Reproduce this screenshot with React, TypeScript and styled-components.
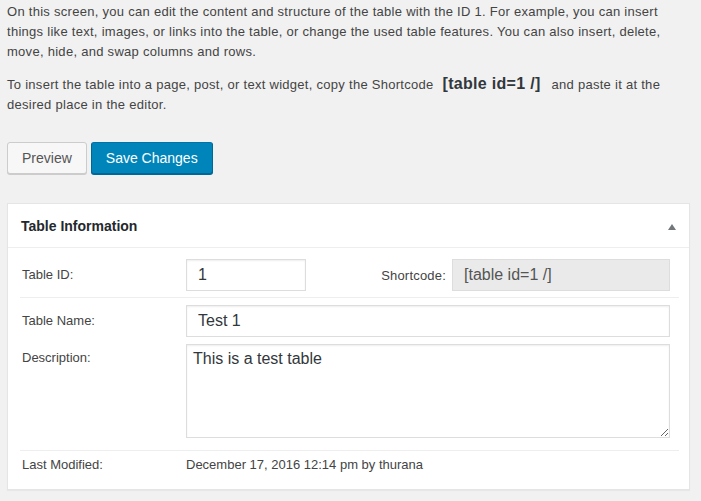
import React from "react";
import styled, { createGlobalStyle } from "styled-components";

const Global = createGlobalStyle`
  html, body { margin: 0; padding: 0; background: #f1f1f1; }
  body { font-family: "Liberation Sans", Arial, sans-serif; color: #444; font-size: 13px; }
  * { box-sizing: border-box; }
`;

const Page = styled.div`
  padding: 2px 12px 12px 7px;
  width: 701px;
`;

const Para = styled.p`
  margin: 0 0 13px;
  font-size: 13px;
  line-height: 20px;
  letter-spacing: 0.28px;
  color: #444;
  white-space: nowrap;
`;

const InlineCode = styled.span`
  display: inline-block;
  font-size: 16px;
  line-height: 18px;
  font-weight: bold;
  letter-spacing: 0.3px;
  color: #32373c;
  padding: 0 7px 0 9px;
`;

const Actions = styled.div`
  display: flex;
  gap: 4px;
  margin-top: 27px;
  margin-bottom: 29px;
`;

const Button = styled.button<{ $primary?: boolean }>`
  height: 32px;
  padding: 0 14px;
  font-family: inherit;
  font-size: 14px;
  border-radius: 3px;
  border: 1px solid #ccc;
  border-color: ${(p) => (p.$primary ? "#0073aa #006799 #006799" : "#ccc")};
  background: ${(p) => (p.$primary ? "#0085ba" : "#f7f7f7")};
  color: ${(p) => (p.$primary ? "#fff" : "#555")};
  box-shadow: ${(p) => (p.$primary ? "0 1px 0 #006799" : "0 1px 0 #ccc")};
  cursor: pointer;
`;

const Panel = styled.section`
  width: 683px;
  background: #fff;
  border: 1px solid #e5e5e5;
  box-shadow: 0 1px 1px rgba(0, 0, 0, 0.04);
`;

const PanelHeader = styled.header`
  height: 44px;
  display: flex;
  align-items: center;
  justify-content: space-between;
  padding: 0 13px 0 13px;
  border-bottom: 1px solid #eee;
`;

const PanelTitle = styled.h2`
  margin: 0;
  font-size: 14px;
  font-weight: bold;
  color: #23282d;
`;

const Toggle = styled.span`
  width: 0;
  height: 0;
  border-left: 4px solid transparent;
  border-right: 4px solid transparent;
  border-bottom: 6px solid #72777c;
  margin-top: 2px;
`;

const PanelBody = styled.div`
  padding: 0 10px 14px 12px;
`;

const Row = styled.div<{ $pad: string; $sep?: boolean; $top?: boolean }>`
  display: grid;
  grid-template-columns: 166px 1fr;
  align-items: ${(p) => (p.$top ? "start" : "center")};
  padding: ${(p) => p.$pad};
  border-bottom: ${(p) => (p.$sep ? "1px solid #eee" : "none")};
`;

const Label = styled.div<{ $top?: number }>`
  padding-left: 2px;
  padding-top: ${(p) => p.$top ?? 0}px;
  font-size: 13px;
  line-height: 20px;
  color: #444;
`;

const Field = styled.div`
  display: flex;
  align-items: center;
`;

const TextInput = styled.input<{ $w?: number }>`
  height: 32px;
  width: ${(p) => (p.$w ? `${p.$w}px` : "484px")};
  padding: 0 11px;
  border: 1px solid #ddd;
  box-shadow: inset 0 1px 2px rgba(0, 0, 0, 0.07);
  font-family: inherit;
  font-size: 16px;
  color: #32373c;
  background: #fff;
  outline: none;
`;

const ShortLabel = styled.span`
  margin-left: auto;
  margin-right: 6px;
  font-size: 13px;
  letter-spacing: 0.2px;
  color: #444;
`;

const ShortBox = styled.div`
  height: 32px;
  width: 218px;
  margin-right: 9px;
  display: flex;
  align-items: center;
  padding: 0 11px;
  background: #eaeaea;
  border: 1px solid #ddd;
  font-size: 16px;
  color: #555;
`;

const TextArea = styled.textarea`
  width: 484px;
  height: 94px;
  padding: 4px 6px;
  border: 1px solid #ddd;
  box-shadow: inset 0 1px 2px rgba(0, 0, 0, 0.07);
  font-family: inherit;
  font-size: 16px;
  line-height: 20px;
  color: #32373c;
  resize: vertical;
  outline: none;
`;

const Value = styled.div`
  font-size: 13px;
  line-height: 20px;
  color: #444;
`;

export default function App() {
  return (
    <>
      <Global />
      <Page>
        <Para>
          On this screen, you can edit the content and structure of the table with the ID 1. For example, you can insert
          <br />
          things like text, images, or links into the table, or change the used table features. You can also insert, delete,
          <br />
          move, hide, and swap columns and rows.
        </Para>
        <Para>
          To insert the table into a page, post, or text widget, copy the Shortcode
          <InlineCode>[table id=1 /]</InlineCode> and paste it at the
          <br />
          desired place in the editor.
        </Para>
        <Actions>
          <Button>Preview</Button>
          <Button $primary>Save Changes</Button>
        </Actions>
        <Panel>
          <PanelHeader>
            <PanelTitle>Table Information</PanelTitle>
            <Toggle />
          </PanelHeader>
          <PanelBody>
            <Row $pad="11px 0 6px" $sep>
              <Label>Table ID:</Label>
              <Field>
                <TextInput $w={120} defaultValue="1" />
                <ShortLabel>Shortcode:</ShortLabel>
                <ShortBox>[table id=1 /]</ShortBox>
              </Field>
            </Row>
            <Row $pad="7px 0 0">
              <Label>Table Name:</Label>
              <Field>
                <TextInput defaultValue="Test 1" />
              </Field>
            </Row>
            <Row $pad="7px 0 12px" $sep $top>
              <Label $top={4}>Description:</Label>
              <Field>
                <TextArea defaultValue="This is a test table" />
              </Field>
            </Row>
            <Row $pad="4px 0 0">
              <Label>Last Modified:</Label>
              <Value>December 17, 2016 12:14 pm by thurana</Value>
            </Row>
          </PanelBody>
        </Panel>
      </Page>
    </>
  );
}
